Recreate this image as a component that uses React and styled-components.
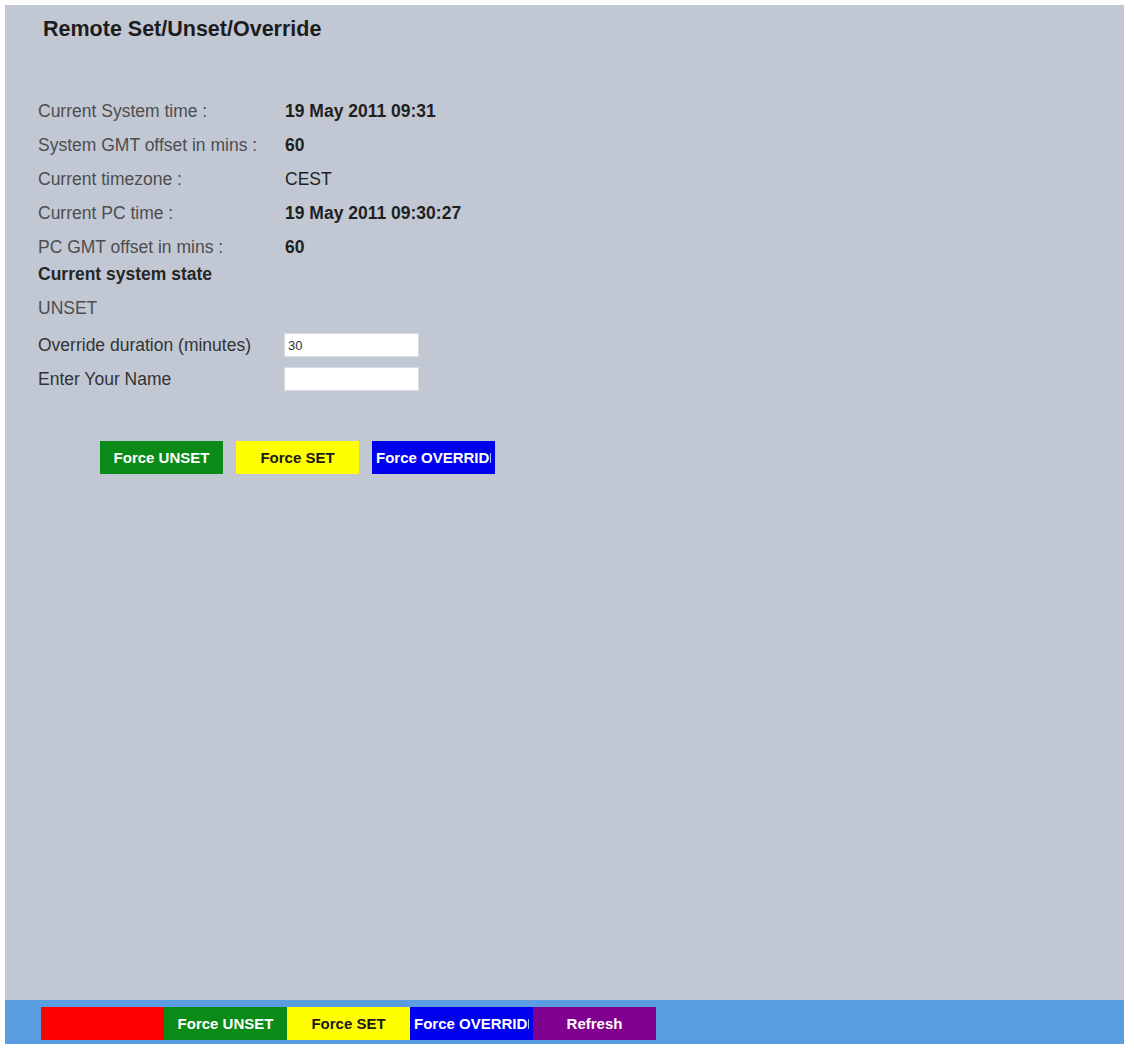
import React, { useState } from 'react';
import styled, { createGlobalStyle } from 'styled-components';

const GlobalStyle = createGlobalStyle`
  html, body {
    margin: 0;
    padding: 0;
    background: #ffffff;
  }
  body {
    font-family: "Liberation Sans", Arial, sans-serif;
  }
`;

const Frame = styled.div`
  margin: 5px 0 0 5px;
  width: 1119px;
  height: 1039px;
  display: flex;
  flex-direction: column;
`;

const Panel = styled.div`
  flex: 1;
  background: #c1c8d3;
  padding: 13px 33px 0 33px;
`;

const Title = styled.h1`
  margin: 0 0 54px 5px;
  font-size: 21.5px;
  line-height: 22px;
  font-weight: bold;
  color: #1c1c1c;
`;

const Row = styled.div`
  display: grid;
  grid-template-columns: 247px auto;
  align-items: center;
  height: ${props => props.h || 34}px;
  margin-top: ${props => props.mt || 0}px;
  font-size: 17.5px;
`;

const Label = styled.span`
  color: ${props => (props.dark ? '#333' : '#4d4d4f')};
  white-space: nowrap;
`;

const Value = styled.span`
  font-weight: bold;
  color: #1f1f1f;
  white-space: nowrap;
`;

const Heading = styled.div`
  font-weight: bold;
  font-size: 17.5px;
  color: #262626;
`;

const Field = styled.input`
  box-sizing: border-box;
  width: 135px;
  height: 24px;
  margin-left: -1px;
  border: 1px solid #d8dbe0;
  background: #fff;
  padding: 2px 3px;
  font-family: "Liberation Sans", Arial, sans-serif;
  font-size: 13px;
  color: #333;
  outline: none;
`;

const ButtonBar = styled.div`
  display: flex;
  gap: 13px;
  margin: 45px 0 0 62px;
`;

const Footer = styled.div`
  height: 44px;
  background: #5a9de0;
  padding: 7px 0 0 36px;
  box-sizing: border-box;
  display: flex;
`;

const ColorButton = styled.button`
  display: block;
  width: 123px;
  height: ${props => props.tall || 33}px;
  padding: 0 4px;
  border: none;
  margin: 0;
  background: ${props => props.bg};
  color: ${props => props.fg || '#fff'};
  font-family: "Liberation Sans", Arial, sans-serif;
  font-size: 15px;
  font-weight: bold;
  text-align: center;
  white-space: nowrap;
  overflow: hidden;
  cursor: pointer;
`;

const ButtonText = styled.span`
  display: block;
  text-align: center;
  overflow: hidden;
`;

const info = [
  ['Current System time :', '19 May 2011 09:31'],
  ['System GMT offset in mins :', '60'],
  ['Current timezone :', 'CEST'],
  ['Current PC time :', '19 May 2011 09:30:27'],
  ['PC GMT offset in mins :', '60'],
];

const actions = [
  { text: 'Force UNSET', bg: '#0a8a16' },
  { text: 'Force SET', bg: '#ffff00', fg: '#1a1a1a' },
  { text: 'Force OVERRIDE', bg: '#0000f0' },
];

const footerActions = [
  { text: '', bg: '#ff0000' },
  { text: 'Force UNSET', bg: '#0a8a16' },
  { text: 'Force SET', bg: '#ffff00', fg: '#1a1a1a' },
  { text: 'Force OVERRIDE', bg: '#0000f0' },
  { text: 'Refresh', bg: '#800090' },
];

export default function App() {
  const [duration, setDuration] = useState('30');
  const [name, setName] = useState('');

  return (
    <>
      <GlobalStyle />
      <Frame>
        <Panel>
          <Title>Remote Set/Unset/Override</Title>
          {info.map(([label, value]) => (
            <Row key={label}>
              <Label>{label}</Label>
              <Value style={{ fontWeight: label === 'Current timezone :' ? 'normal' : 'bold' }}>
                {value}
              </Value>
            </Row>
          ))}
          <Row h={20}>
            <Heading>Current system state</Heading>
          </Row>
          <Row mt={7}>
            <Label>UNSET</Label>
          </Row>
          <Row mt={3}>
            <Label dark>Override duration (minutes)</Label>
            <Field value={duration} onChange={e => setDuration(e.target.value)} />
          </Row>
          <Row>
            <Label dark>Enter Your Name</Label>
            <Field value={name} onChange={e => setName(e.target.value)} />
          </Row>
          <ButtonBar>
            {actions.map(a => (
              <ColorButton key={a.text} bg={a.bg} fg={a.fg}>
                <ButtonText>{a.text}</ButtonText>
              </ColorButton>
            ))}
          </ButtonBar>
        </Panel>
        <Footer>
          {footerActions.map((a, i) => (
            <ColorButton key={i} bg={a.bg} fg={a.fg}>
              <ButtonText>{a.text}</ButtonText>
            </ColorButton>
          ))}
        </Footer>
      </Frame>
    </>
  );
}
